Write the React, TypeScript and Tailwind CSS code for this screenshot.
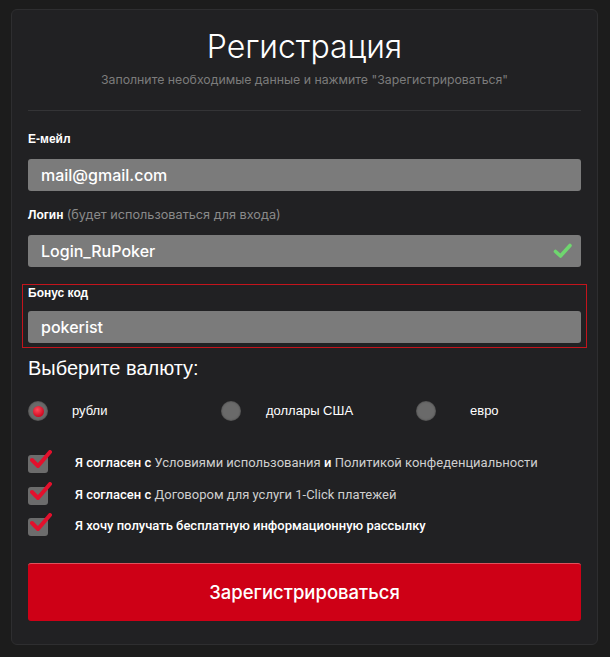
import React from "react";

const sans = { fontFamily: "Inter, 'Noto Sans', sans-serif" };
const lab = { fontFamily: "'Liberation Sans', Arial, sans-serif" };
const rob = { fontFamily: "Roboto, 'Liberation Sans', sans-serif" };

function Check() {
  return (
    <div className="relative w-[20px] h-[20px] shrink-0">
      <div className="absolute left-0 top-[2px] w-[20px] h-[18px] rounded-[3px] bg-[#6c6c6c]" />
      <svg className="absolute left-[2px] -top-[3px]" width="22" height="20" viewBox="0 0 22 20">
        <path d="M2 10 L8 16 L20 2" fill="none" stroke="#e3102c" strokeWidth="4" strokeLinecap="round" strokeLinejoin="round" />
      </svg>
    </div>
  );
}

function Radio({ on }: { on?: boolean }) {
  return (
    <div className="w-[20px] h-[20px] rounded-full bg-[#6a6a6a] flex items-center justify-center shrink-0 shadow-[inset_0_0_2px_rgba(0,0,0,0.5)]">
      {on && <div className="w-[11px] h-[11px] rounded-full bg-[radial-gradient(circle_at_40%_35%,#ff4a5a,#d10a22_70%)]" />}
    </div>
  );
}

export default function App() {
  return (
    <div className="w-[610px] h-[657px] bg-[#1c1c1c] pt-[9px] pl-[11px]">
      <div className="w-[587px] h-[636px] bg-[#212123] border border-[#2e2e30] rounded-[6px] px-[16px] pt-[17px]">
        <h1 className="text-center text-[32px] leading-[40px] text-white font-light" style={sans}>Регистрация</h1>
        <p className="mt-[4px] text-center text-[12.3px] leading-[18px] text-[#7c7c7c]" style={sans}>
          Заполните необходимые данные и нажмите "Зарегистрироваться"
        </p>
        <div className="mt-[21px] h-px bg-[#343436]" />

        <div className="mt-[20px] text-[12px] leading-[16px] font-bold text-white" style={lab}>Е-мейл</div>
        <div className="mt-[12px] h-[32px] rounded-[3px] bg-[#7b7b7b] pl-[13px] flex items-center text-[16px] font-medium text-white" style={sans}>
          mail@gmail.com
        </div>

        <div className="mt-[16px] text-[12px] leading-[16px] text-white" style={lab}>
          <span className="font-bold">Логин</span>{" "}
          <span className="text-[#8a8a8a] text-[12.7px]" style={sans}>(будет использоваться для входа)</span>
        </div>
        <div className="mt-[12px] h-[32px] rounded-[3px] bg-[#7b7b7b] pl-[13px] pr-[8px] flex items-center justify-between text-[16px] font-medium text-white" style={sans}>
          <span>Login_RuPoker</span>
          <svg width="20" height="18" viewBox="0 0 20 18">
            <path d="M2.5 9.5 L7.5 14 L17 3.5" fill="none" stroke="#6fd66f" strokeWidth="3.6" strokeLinecap="round" strokeLinejoin="round" />
          </svg>
        </div>

        <div className="mt-[17px] -mx-[6px] px-[5px] pb-[4px] border border-[#c4141c]">
          <div className="text-[12px] leading-[16px] font-bold text-white" style={lab}>Бонус код</div>
          <div className="mt-[10px] h-[32px] rounded-[3px] bg-[#7b7b7b] pl-[13px] flex items-center text-[16px] font-medium text-white" style={sans}>
            pokerist
          </div>
        </div>

        <div className="mt-[8px] text-[20px] leading-[24px] text-white" style={lab}>Выберите валюту:</div>

        <div className="mt-[21px] flex items-center h-[20px] text-[13px] text-white" style={lab}>
          <div className="w-[193px] flex items-center gap-[24px]"><Radio on /><span>рубли</span></div>
          <div className="w-[195px] flex items-center gap-[25px]"><Radio /><span>доллары США</span></div>
          <div className="flex items-center gap-[34px]"><Radio /><span>евро</span></div>
        </div>

        <div className="mt-[32px] flex flex-col gap-[11.5px] text-[13px] text-white" style={rob}>
          <div className="flex items-center h-[20px] gap-[27px]">
            <Check />
            <span>
              <span className="font-medium">Я согласен с</span> <span className="text-[#cfcfcf]">Условиями использования</span>{" "}
              <span className="font-medium">и</span> <span className="text-[#cfcfcf]">Политикой конфеденциальности</span>
            </span>
          </div>
          <div className="flex items-center h-[20px] gap-[27px]">
            <Check />
            <span>
              <span className="font-medium">Я согласен с</span> <span className="text-[#cfcfcf]">Договором для услуги 1-Click платежей</span>
            </span>
          </div>
          <div className="flex items-center h-[20px] gap-[27px]">
            <Check />
            <span className="font-medium">Я хочу получать бесплатную информационную рассылку</span>
          </div>
        </div>

        <button className="mt-[27px] w-full h-[58px] rounded-[3px] bg-[#ce0016] border-t border-[#e0515c] text-white text-[18.5px] font-medium" style={sans}>
          Зарегистрироваться
        </button>
      </div>
    </div>
  );
}
